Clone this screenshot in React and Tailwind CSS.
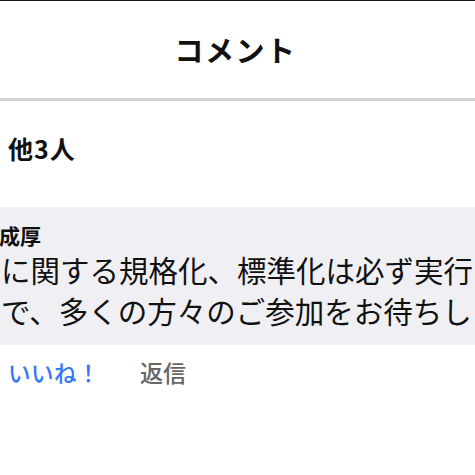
export default function App() {
  const font = { fontFamily: '"Noto Sans CJK JP", "Noto Sans", sans-serif' }
  return (
    <div className="w-[475px] h-[475px] overflow-hidden bg-white text-[#111]" style={font}>
      <div className="h-[1px] bg-[#16161e]" />
      <div className="h-[97px] flex items-center justify-center">
        <h1 className="text-[29px] font-bold leading-none tracking-[1.5px] ml-[-4px]">コメント</h1>
      </div>
      <div className="h-[3px] bg-[#d2d2d2]" />

      <div className="h-[106px] pl-[8px] pt-[33px]">
        <p className="text-[25px] font-semibold leading-[28px] tracking-[1px]">他3人</p>
      </div>

      <div className="bg-[#f0f0f4] h-[138px] pt-[15px] overflow-hidden">
        <p className="ml-[-1px] text-[21px] font-bold leading-[27px] whitespace-nowrap">成厚</p>
        <p className="ml-[1px] text-[29.5px] leading-[41px] whitespace-nowrap">に関する規格化、標準化は必ず実行</p>
        <p className="ml-[1px] text-[29.5px] leading-[41px] whitespace-nowrap">で、多くの方々のご参加をお待ちし</p>
      </div>

      <div className="flex items-center gap-[40px] pl-[8px] pt-[13px]">
        <button className="text-[22.5px] font-medium text-[#3478f6] leading-[28px] tracking-[0.5px]">いいね！</button>
        <button className="text-[23px] font-medium text-[#666] leading-[28px]">返信</button>
      </div>
    </div>
  )
}
